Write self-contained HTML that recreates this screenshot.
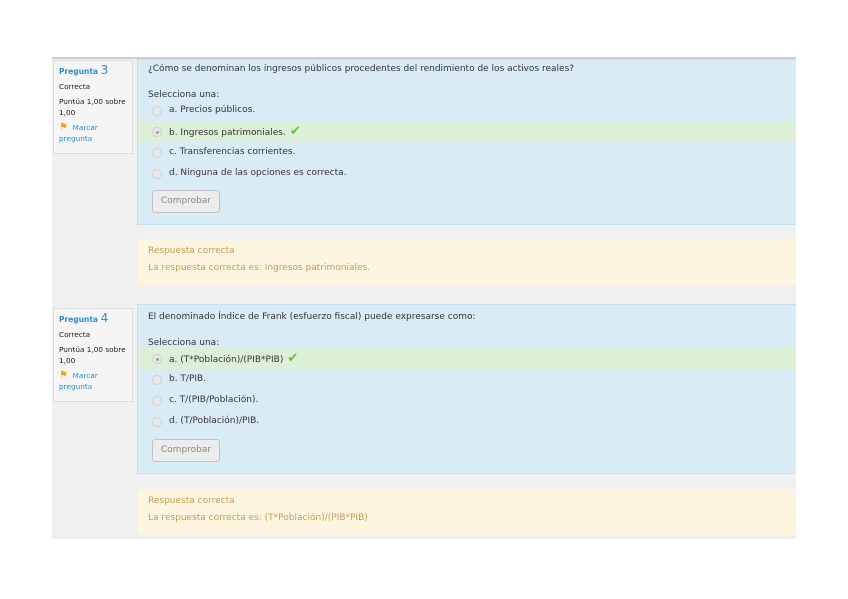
<!DOCTYPE html>
<html><head><meta charset="utf-8"><style>
body{margin:0;width:848px;height:599px;background:#fff;font-family:"DejaVu Sans",sans-serif;font-size:9px;color:#333;position:relative;overflow:hidden}
.page{position:absolute;left:52px;top:57px;width:744px;height:480px;background:#f0f0f0;border-top:2px solid #ccd0d4}
.info{position:absolute;left:1px;width:80px;background:#f5f5f5;border:1px solid #dcdcdc;font-size:7.3px;color:#222;padding:4px 0 0 5px;box-sizing:border-box;line-height:11px}
.info .q{color:#2a8fcb;font-weight:bold;font-size:7.5px}
.info .q b{font-size:12px;font-weight:normal}
.info p{margin:4px 0}
.flag{color:#2a8fcb}
.blue{position:absolute;left:85px;right:0;background:#d9ebf5;border:1px solid #c5dfee;border-right:none}
.qt{position:absolute;left:10px;top:4px}
.sel{position:absolute;left:10px}
.opt{position:absolute;left:0;right:0;height:21px;line-height:21px;padding-left:31px}
.opt.ok{background:#deefd8}
.opt i{position:absolute;left:14px;top:6px;width:8px;height:8px;border-radius:50%;background:#e8e8e8;border:1px solid #cfcfcf}
.opt.ok i::after{content:"";position:absolute;left:2.5px;top:2.5px;width:3px;height:3px;border-radius:50%;background:#999}
.chk{color:#6cbb3c;font-size:13px;margin-left:4px}
.btn{position:absolute;left:14px;width:66px;height:21px;border:1px solid #c2c2c2;border-radius:3px;background:#ececec;color:#888;text-align:center;line-height:21px}
.fb{position:absolute;left:85px;right:0;height:46px;background:#fcf6e1;color:#c49a55;border-radius:3px 0 0 3px}
.fb div{position:absolute;left:11px}
</style></head><body>
<div class="page">
<div class="info" style="top:1px;height:94px"><div class="q">Pregunta <b>3</b></div><p>Correcta</p><p>Puntúa 1,00 sobre<br>1,00</p><p><span style="color:#f0a500;font-size:10px">⚑</span> &nbsp;<span class="flag">Marcar<br>pregunta</span></p></div>
<div class="blue" style="top:0px;height:164px">
<div class="qt">¿Cómo se denominan los ingresos públicos procedentes del rendimiento de los activos reales?</div>
<div class="sel" style="top:30px">Selecciona una:</div>
<div class="opt" style="top:40px"><i></i>a. Precios públicos.</div>
<div class="opt ok" style="top:61px"><i></i>b. Ingresos patrimoniales.<span class="chk">✔</span></div>
<div class="opt" style="top:82px"><i></i>c. Transferencias corrientes.</div>
<div class="opt" style="top:103px"><i></i>d. Ninguna de las opciones es correcta.</div>
<div class="btn" style="top:130px">Comprobar</div>
</div>
<div class="fb" style="top:180px"><div style="top:7px">Respuesta correcta</div><div style="top:24px">La respuesta correcta es: Ingresos patrimoniales.</div></div>

<div class="info" style="top:249px;height:94px"><div class="q">Pregunta <b>4</b></div><p>Correcta</p><p>Puntúa 1,00 sobre<br>1,00</p><p><span style="color:#f0a500;font-size:10px">⚑</span> &nbsp;<span class="flag">Marcar<br>pregunta</span></p></div>
<div class="blue" style="top:245px;height:168px">
<div class="qt" style="top:7px">El denominado Índice de Frank (esfuerzo fiscal) puede expresarse como:</div>
<div class="sel" style="top:33px">Selecciona una:</div>
<div class="opt ok" style="top:43px"><i></i>a. (T*Población)/(PIB*PIB)<span class="chk">✔</span></div>
<div class="opt" style="top:64px"><i></i>b. T/PIB.</div>
<div class="opt" style="top:85px"><i></i>c. T/(PIB/Población).</div>
<div class="opt" style="top:106px"><i></i>d. (T/Población)/PIB.</div>
<div class="btn" style="top:134px">Comprobar</div>
</div>
<div class="fb" style="top:430px"><div style="top:7px">Respuesta correcta</div><div style="top:24px">La respuesta correcta es: (T*Población)/(PIB*PIB)</div></div>
</div>
</body></html>
